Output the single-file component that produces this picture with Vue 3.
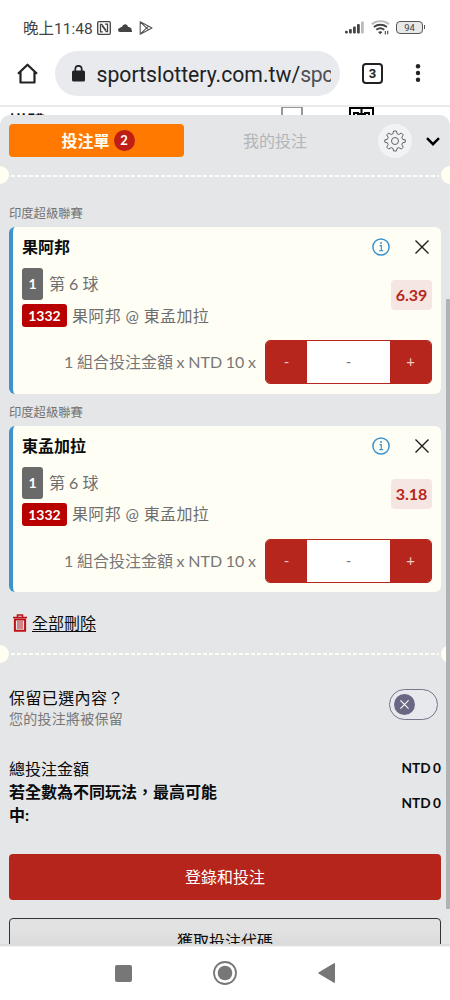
<script setup>
const bets = [
  { name: '果阿邦', odds: '6.39' },
  { name: '東孟加拉', odds: '3.18' }
]
</script>

<template>
  <div class="phone">
    <div class="status">
      <span class="clock">晚上11:48</span>
      <svg class="nfc" width="14" height="14" viewBox="0 0 14 14" fill="none" stroke="#444" stroke-width="1.3">
        <rect x="0.7" y="0.7" width="12.6" height="12.6" rx="1.2" />
        <path d="M5.800 10.900H3.500V3.300h1.300L9 9.300M8 3.100h2.500v7.600H9.300L5 4.700" />
      </svg>
      <svg class="cloud" width="14" height="8" viewBox="0 0 14 8" fill="#444">
        <path d="M2 8a2 2 0 0 1 0-4C2.700 2.800 3.500 3 4 3C5-.8 9.500-.8 10 3c2.300 0 4 1.300 4 5z" />
      </svg>
      <svg class="play" width="14" height="14" viewBox="0 0 14 14" fill="none" stroke="#555" stroke-width="1.1" stroke-linejoin="round">
        <path d="M1.200.8v12.400L13 7zM1.200.8l8.300 8M1.200 13.200l8.300-8" />
      </svg>
      <span class="gap"></span>
      <svg class="signal" width="20" height="13" viewBox="0 0 20 13" fill="#444">
        <rect x="0" y="9.700" width="2.800" height="2.800" rx="1" />
        <rect x="4" y="8" width="2.800" height="4.500" rx="1" />
        <rect x="8" y="5.500" width="2.800" height="7" rx="1" />
        <rect x="12" y="3" width="2.800" height="9.500" rx="1" />
        <rect x="16" y="0.500" width="2.800" height="12" rx="1" fill="#bbb" />
      </svg>
      <svg class="wifi" width="19" height="15" viewBox="0 0 19 15" fill="none" stroke="#444" stroke-width="1.900">
        <path d="M.8 4.200c4.800-4.100 12.400-4.100 17.200 0" stroke="#bbb" />
        <path d="M2.900 7c3.800-3 9.200-3 13 0M5.300 9.700c2.500-1.900 5.500-1.900 8 0" />
        <path d="M7 12l2.300 2.300L11.500 12q-2.200-1.500-4.500 0z" fill="#444" stroke="none" />
        <path d="M14.300 14.500v-3.600M16.700 10.800v3.500" stroke-width="1.100" />
      </svg>
      <span class="battery"><b>94</b></span>
    </div>

    <div class="browser">
      <svg class="home" width="21" height="21" viewBox="0 0 21 21" fill="none" stroke="#202224" stroke-width="2.200">
        <path d="M1 10.700 10.500 1.700 20 10.700M3.500 9v10.500h14V9" stroke-linejoin="round" />
      </svg>
      <div class="url">
        <svg width="13" height="17" viewBox="0 0 13 17">
          <rect y="5.500" width="13" height="11" rx="1.500" fill="#202224" />
          <path d="M3.300 7V4a3.200 3.200 0 0 1 6.400 0v3" fill="none" stroke="#202224" stroke-width="1.700" />
        </svg>
        <span class="address">sportslottery.com.tw/<i>spc</i></span>
      </div>
      <span class="tabs">3</span>
      <svg class="dots" width="6" height="18" viewBox="0 0 6 18" fill="#202224">
        <circle cx="3" cy="2.200" r="2.200" /><circle cx="3" cy="9" r="2.200" /><circle cx="3" cy="15.800" r="2.200" />
      </svg>
    </div>

    <div class="page">
      <span class="under">媒體</span>
      <span class="checkbox"></span>
      <svg class="grid" width="25" height="16" viewBox="0 0 25 16" fill="none" stroke="#000" stroke-width="2">
        <path d="M1 16V1h23v15M12.500 1v6M5 10V6h4v5M16 11V6h4v5M9 7h7" />
      </svg>
    </div>

    <div class="sheet">
      <div class="head">
        <div class="tab"><span class="lift">投注單</span><span class="count">2</span></div>
        <div class="tab-off">我的投注</div>
        <div class="gear">
          <svg width="22" height="22" viewBox="0 0 22 22" fill="none" stroke="#555" stroke-width="0.900">
            <circle cx="11" cy="11" r="3.500" />
            <path d="M9.600 1h2.800l.6 2.700 1.900.8 2.400-1.500 2 2-1.500 2.400.8 1.900 2.700.6v2.300l-2.700.6-.8 1.900 1.500 2.400-2 2-2.400-1.500-1.900.8-.6 2.600H9.600L9 18.400l-1.900-.8-2.400 1.500-2-2 1.500-2.400-.8-1.900-2.600-.6V9.900l2.600-.6.8-1.900L2.700 5l2-2 2.400 1.500L9 3.700z" />
          </svg>
        </div>
        <svg class="chev" width="14" height="9" viewBox="0 0 14 9" fill="none" stroke="#000" stroke-width="2.400">
          <path d="M1 1.200 7 7.200l6-6" />
        </svg>
      </div>

      <div class="tear"><i></i></div>

      <template v-for="bet in bets" :key="bet.name">
        <div class="league">印度超級聯賽</div>
        <div class="card">
          <div class="title">
            <strong>{{ bet.name }}</strong>
            <svg width="18" height="18" viewBox="0 0 18 18" fill="none" stroke="#3c94cf">
              <circle cx="9" cy="9" r="8.100" stroke-width="1.500" />
              <path d="M7.500 7.700h1.800v5M7.300 12.600h3.900" stroke-width="1.200" />
              <circle cx="9" cy="5" r="1" fill="#3c94cf" stroke="none" />
            </svg>
            <svg class="close" width="14" height="14" viewBox="0 0 14 14" stroke="#1c1c1c" stroke-width="1.400">
              <path d="M.5.5l13 13M13.500.5l-13 13" />
            </svg>
          </div>
          <div class="detail">
            <div class="lines">
              <div class="line first"><span class="num">1</span><span class="ball">第 6 球</span></div>
              <div class="line"><span class="code">1332</span><span class="match">果阿邦 @ 東孟加拉</span></div>
            </div>
            <span class="odds">{{ bet.odds }}</span>
          </div>
          <div class="stake">
            <span class="formula">1 組合投注金額 x NTD 10 x</span>
            <div class="stepper"><span>-</span><em>-</em><span>+</span></div>
          </div>
        </div>
      </template>

      <div class="clear">
        <svg width="14" height="18" viewBox="0 0 14 18" fill="none" stroke="#bd1117">
          <path d="M0 3.500h14M4.500 3V1h5v2" stroke-width="1.600" />
          <path d="M1.900 5.500v11.300h10.200V5.500z" stroke-width="2" />
          <path d="M5 7v8M7 7v8M9 7v8" stroke-width="0.900" />
        </svg>
        <u>全部刪除</u>
      </div>

      <div class="tear second"><i></i></div>

      <div class="keep">
        <div>
          <div class="keep-title">保留已選內容？</div>
          <div class="keep-sub">您的投注將被保留</div>
        </div>
        <div class="toggle">
          <span>
            <svg width="9" height="9" viewBox="0 0 9 9" stroke="#fff" stroke-width="1.100"><path d="M.4.4l8.200 8.200M8.600.4.4 8.600" /></svg>
          </span>
        </div>
      </div>

      <div class="total"><span>總投注金額</span><b>NTD 0</b></div>
      <div class="total win"><strong>若全數為不同玩法，最高可能中:</strong><b>NTD 0</b></div>

      <div class="login">登錄和投注</div>
      <div class="getcode">獲取投注代碼</div>
      <div class="scroll"></div>
    </div>

    <div class="nav">
      <span class="square"></span>
      <svg width="24" height="24" viewBox="0 0 24 24"><circle cx="12" cy="12" r="11" fill="none" stroke="#777" stroke-width="1.800" /><circle cx="12" cy="12" r="7.300" fill="#777" /></svg>
      <svg class="back" width="17" height="20" viewBox="0 0 17 20" fill="#777"><path d="M17 1v18q0 1.500-1.500.600L.800 10.800q-1-.800 0-1.600L15.500.400Q17-.500 17 1z" /></svg>
    </div>
  </div>
</template>

<style>
html, body { margin: 0; background: #fff; }
</style>

<style scoped>
* { box-sizing: border-box; }
i, em { font-style: normal; }
svg { flex: none; display: block; }
.phone {
  width: 450px; height: 1000px; overflow: hidden; display: flex; flex-direction: column;
  background: #fff; color: #0b0b0b; white-space: nowrap;
  font-family: Lato, "Noto Sans CJK TC", sans-serif; font-size: 16px;
}
.status {
  height: 51px; padding: 4px 25px 0 23px; display: flex; align-items: center;
  font-family: Roboto, "Noto Sans CJK TC", sans-serif; color: #444;
}
.clock { width: 74px; font-size: 15.500px; padding-bottom: 1px; }
.cloud { margin-left: 7px; }
.play { margin-left: 7px; }
.gap { flex: 1; }
.signal { margin-right: 1px; }
.wifi { margin-left: 5px; }
.battery {
  position: relative; width: 27px; height: 13px; margin: 0 2px 0 6px; border: 1.500px solid #555; border-radius: 4px;
  background: #e8e8e8; display: flex; align-items: center; justify-content: center; font-size: 9.500px;
}
.battery b { font-weight: 400; }
.battery::after { content: ""; position: absolute; right: -3px; top: 3px; width: 1.500px; height: 4px; background: #555; }
.browser { height: 54px; display: flex; align-items: flex-start; padding-left: 17px; font-family: Roboto, sans-serif; color: #202224; }
.home { margin-top: 12px; }
.url {
  width: 285px; height: 45px; margin-left: 17px; padding-left: 17px; border-radius: 23px; background: #e9eaee;
  display: flex; align-items: center; flex: none;
}
.address { margin-left: 11.500px; font-size: 21.200px; width: 234.500px; overflow: hidden; padding-top: 1px; }
.address i { color: #4f5154; letter-spacing: -0.300px; }
.tabs {
  width: 21px; height: 21px; margin: 12px 0 0 22px; border: 2px solid #202224; border-radius: 4px;
  font-size: 13px; font-weight: 700; line-height: 17px; text-align: center;
}
.dots { margin: 13px 0 0 32px; }
.page { height: 10px; border-top: 2px solid #e9eaec; display: flex; align-items: flex-start; overflow: visible; flex: none; }
.under { width: 50px; padding-left: 9px; margin-top: 4px; font-size: 18px; font-weight: 700; line-height: 22px; }
.checkbox { width: 22px; height: 20px; margin-left: 231px; border: 2px solid #999; border-top-width: 1px; margin-top: 0; }
.grid { margin-left: 46px; }
.sheet {
  position: relative; height: 829px; flex: none; overflow: hidden; background: #e4e6e8;
  border-radius: 10px 10px 0 0; padding: 9px 9px 0;
}
.head { height: 33px; display: flex; align-items: center; }
.tab {
  width: 175px; height: 33px; border-radius: 4px; background: #ff7900; color: #fffef5; font-weight: 700;
  display: flex; align-items: center; justify-content: center; padding-left: 3px;
}
.lift { padding-bottom: 2px; }
.count {
  width: 21px; height: 21px; margin-left: 4px; border-radius: 50%; background: #c01d14; color: #fff;
  font-size: 13px; line-height: 21px; text-align: center; font-weight: 700;
}
.tab-off { width: 182px; text-align: center; color: #b3b5b7; padding-bottom: 2px; }
.gear {
  width: 34px; height: 34px; margin-left: 12px; border-radius: 50%; background: #f2f3f4; flex: none;
  display: flex; align-items: center; justify-content: center;
}
.chev { margin: 2px 0 0 14px; }
.tear { position: relative; height: 18px; margin: 9px -9px 0; display: flex; align-items: center; justify-content: center; }
.tear::before, .tear::after { content: ""; position: absolute; top: 0; width: 18px; height: 18px; border-radius: 50%; background: #fffff2; }
.tear::before { left: -9px; }
.tear::after { right: -9px; }
.tear i { width: 428px; height: 2px; margin-top: 2px; background: repeating-linear-gradient(90deg, #fdfdf8 0 4px, transparent 4px 6px); }
.league { height: 32px; line-height: 25px; padding-top: 6px; font-size: 12.300px; color: #727272; }
.tear + .league { height: 43px; padding-top: 17px; }
.card { height: 166.500px; background: #fffef5; border-left: 4px solid #3c94cf; border-radius: 6px; padding: 0 9px; }
.title { height: 40px; display: flex; align-items: center; }
.title strong { flex: 1; font-size: 16px; line-height: 40px; }
.title .close { margin: 0 3px 0 25px; }
.detail { height: 61px; padding-top: 1px; display: flex; justify-content: space-between; color: #6e6e6e; }
.line { height: 23px; display: flex; align-items: center; }
.first { height: 32px; margin-bottom: 4px; }
.num, .code { color: #fff; border-radius: 3px; font-size: 14px; font-weight: 700; text-align: center; }
.num { width: 21px; height: 32px; line-height: 32px; background: #6a6a6a; }
.code { width: 45px; height: 23px; line-height: 23px; background: #b80000; }
.ball { margin-left: 6px; padding-bottom: 2px; }
.match { margin-left: 5px; padding-bottom: 2px; letter-spacing: 0.350px; }
.odds {
  width: 41px; height: 30px; line-height: 30px; margin-top: 12px; text-align: center; background: #f6e6e1;
  color: #b6261c; border-radius: 4px; font-size: 16px; font-weight: 700;
}
.stake { margin-top: 12px; height: 44px; display: flex; align-items: center; justify-content: flex-end; color: #777; }
.formula { margin-right: 9px; padding-bottom: 2px; word-spacing: -0.400px; }
.stepper {
  width: 167px; height: 44px; border: 1px solid #b6261c; border-radius: 5px; overflow: hidden; background: #fff;
  display: flex; line-height: 41px; text-align: center; font-size: 15px;
}
.stepper span { width: 41px; background: #b6261c; color: #f4c9c2; }
.stepper em { flex: 1; }
.clear { height: 53px; padding: 9px 0 0 4px; display: flex; align-items: center; }
.clear u { margin-left: 5px; padding-bottom: 2px; text-underline-offset: 2px; }
.second { margin-top: 0; }
.second i { margin-top: 0; }
.keep { margin-top: 22px; height: 50px; display: flex; justify-content: space-between; }
.keep-title { height: 25px; line-height: 25px; font-size: 16px; letter-spacing: 0.400px; }
.keep-sub { line-height: 18px; font-size: 14px; letter-spacing: 0.250px; color: #777; }
.toggle { width: 49px; height: 31px; margin: 4px 3px 0 0; padding: 4px; border: 1px solid #77758b; border-radius: 16px; background: #e8e9ec; }
.toggle span { width: 21px; height: 21px; border-radius: 50%; background: #696783; display: flex; align-items: center; justify-content: center; }
.total { height: 23px; margin-top: 21px; display: flex; align-items: center; justify-content: space-between; }
.total b { font-size: 13.700px; font-weight: 700; word-spacing: -1px; }
.win { height: 47px; margin-top: 0; line-height: 23px; }
.win strong { width: 216px; white-space: normal; word-break: break-all; }
.login { height: 46px; line-height: 46px; margin-top: 28px; border-radius: 4px; background: #b5251b; color: #fff; text-align: center; }
.getcode {
  height: 46px; line-height: 44px; margin-top: 18px; border: 1px solid #333; border-radius: 4px; text-align: center;
  background: linear-gradient(#e2e2e2 10px, #d8d8d8 32px);
}
.scroll { position: absolute; right: 0; top: 184px; width: 4px; height: 610px; background: #b0b2b3; }
.nav { height: 56px; border-top: 2px solid #dcdee0; box-shadow: inset 0 1px #f2f3f4; display: flex; align-items: center; padding-left: 115px; }
.square { width: 17px; height: 17px; background: #777; border-radius: 2px; }
.nav svg { margin-left: 81px; }
.nav .back { margin-left: 81px; }
</style>
